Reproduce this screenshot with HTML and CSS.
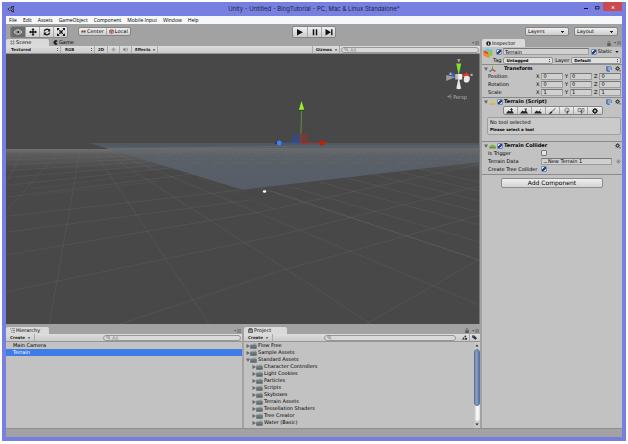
FILE: index.html
```html
<!DOCTYPE html>
<html lang="en">
<head>
<meta charset="utf-8">
<title>Unity - Untitled - BlogTutorial - PC, Mac &amp; Linux Standalone*</title>
<link rel="stylesheet" href="styles.css">
</head>
<body>
<svg class="defs" aria-hidden="true">
  <defs>
    <symbol id="fold-open" viewBox="0 0 4 4"><path d="M0 .5h4L2 4z" fill="#666"/></symbol>
    <symbol id="fold-closed" viewBox="0 0 4 4"><path d="M.5 0v4L4 2z" fill="#666"/></symbol>
    <symbol id="folder" viewBox="0 0 7 6"><path d="M.5 1.2h2.5l.6-.8h2.6v5.100H.5z" fill="#8b9294"/><path d="M1 .8h5" stroke="#b9bfc0" stroke-width=".6"/><path d="M.3 2.200h6.400v3.500H.3z" fill="#5f6a6c"/><path d="M.6 3h5.800" stroke="#879496" stroke-width=".7"/></symbol>
    <symbol id="panel-menu" viewBox="0 0 7 4"><path d="M0 1h2.400L1.200 2.600z" fill="#555"/><path d="M3 .8h4M3 2h4M3 3.200h4" stroke="#666" stroke-width=".7"/></symbol>
    <symbol id="lock" viewBox="0 0 4 5"><path d="M1 2.500V1.400a1 1 0 0 1 2 0v1.100" fill="none" stroke="#666" stroke-width=".7"/><path d="M.3 2.300h3.400V5H.3z" fill="#555"/></symbol>
    <symbol id="gear" viewBox="0 0 6 6"><circle cx="2.600" cy="2.600" r="1.500" fill="none" stroke="#333" stroke-width="1"/><path d="M2.600 0v5.200M0 2.600h5.200M.8.8l3.600 3.600M4.400.8.8 4.400" stroke="#333" stroke-width=".5"/><circle cx="2.600" cy="2.600" r=".7" fill="#c2c2c2"/><path d="M4.200 4.500H6l-.9 1.300z" fill="#333"/></symbol>
    <symbol id="book" viewBox="0 0 6 6"><path d="M.3.3h4L5.700 1.500v4.200H1.500L.3 4.500z" fill="#3f65a0"/><path d="M1.600.6h3.600v4.200H1.600z" fill="#8fa9cf"/><path d="M4 4.200h1.700v1.500H4z" fill="#e8eef5"/></symbol>
    <symbol id="search" viewBox="0 0 6 5"><circle cx="2" cy="2" r="1.300" fill="none" stroke="#777" stroke-width=".6"/><path d="m3 3 1.300 1.500" stroke="#777" stroke-width=".7"/></symbol>
  </defs>
</svg>
<div class="window">
  <header class="titlebar">
    <svg class="app-icon" viewBox="0 0 8 8" aria-hidden="true"><path d="M7.300.8 4.200 1.600 3.700 2.500H2.600L.4 4.100l2.200 1.700h1.100l.5.800 3.100.8L6.600 4.600V3.400z" fill="#23263a"/><path d="M2.100 4.100h2.700L6 2M4.800 4.100 6 6.200M2.100 4.100l1.600-1.400M2.100 4.100l1.600 1.400" fill="none" stroke="#c3c8ee" stroke-width=".6"/></svg>
    <h1 class="title">Unity - Untitled - BlogTutorial - PC, Mac &amp; Linux Standalone*</h1>
    <div class="window-buttons">
      <button type="button" aria-label="Minimize"><svg viewBox="0 0 10 8"><path d="M3 5.500h4" stroke="#111" stroke-width="1"/></svg></button>
      <button type="button" aria-label="Maximize"><svg viewBox="0 0 10 8"><path d="M3.500 3.500h3.500v2.500H3.500z" fill="none" stroke="#222" stroke-width=".9"/></svg></button>
      <button type="button" class="close" aria-label="Close"><svg viewBox="0 0 10 8"><path d="m3.700 3.200 2.600 2.600M6.300 3.200 3.700 5.800" stroke="#fff" stroke-width=".9"/></svg></button>
    </div>
  </header>
  <nav class="menubar">
    <button type="button">File</button><button type="button">Edit</button><button type="button">Assets</button><button type="button">GameObject</button><button type="button">Component</button><button type="button">Mobile Input</button><button type="button">Window</button><button type="button">Help</button>
  </nav>
  <div class="toolbar">
    <div class="toolbar-side">
      <div class="segments tools">
        <button type="button" class="active" aria-label="View"><svg viewBox="0 0 14 10"><path d="M3 5q4-4.500 8 0-4 4.500-8 0z" fill="#777" stroke="#e8e8e8" stroke-width=".8"/><circle cx="7" cy="5" r="1.500" fill="#222" stroke="#ddd" stroke-width=".5"/></svg></button>
        <button type="button" aria-label="Move"><svg viewBox="0 0 14 10"><path d="M7 2v6M4 5h6" stroke="#111" stroke-width="1.300"/><path d="M7 1l1.600 1.700H5.400zM7 9l1.600-1.700H5.400zM3 5l1.700-1.600v3.200zM11 5 9.300 3.400v3.200z" fill="#111"/></svg></button>
        <button type="button" aria-label="Rotate"><svg viewBox="0 0 14 10"><path d="M4.300 4.300C4.800 2 7.500 1.600 9 3M9.700 5.700C9.200 8 6.500 8.400 5 7" fill="none" stroke="#111" stroke-width="1.300"/><path d="M10.200 1.500v2.900H7.400zM3.800 8.500V5.600h2.800z" fill="#111"/></svg></button>
        <button type="button" aria-label="Scale"><svg viewBox="0 0 14 10"><path d="M5.500 3.500h3v3h-3z" fill="#222"/><path d="m4 2 6 6M10 2 4 8" stroke="#222" stroke-width=".9"/><path d="M3 1h2.700L3 3.700zM11 1H8.300L11 3.700zM3 9h2.700L3 6.300zM11 9H8.300L11 6.300z" fill="#111"/></svg></button>
      </div>
      <div class="segments handles">
        <button type="button"><svg class="mini" viewBox="0 0 5 5" aria-hidden="true"><path d="M.4 1.500h1.800v2H.4z" fill="#a33"/><path d="M2.500 1.500h2v2h-2z" fill="#444"/></svg>Center</button>
        <button type="button"><svg class="mini" viewBox="0 0 5 5" aria-hidden="true"><path d="m2.500.3 2 1v2.400l-2 1-2-1V1.300z" fill="#d7a5a5" stroke="#a33" stroke-width=".6"/><path d="M2.500 2.300v2M.7 1.500l1.800.8 1.800-.8" fill="none" stroke="#444" stroke-width=".6"/></svg>Local</button>
      </div>
    </div>
    <div class="segments play">
      <button type="button" aria-label="Play"><svg viewBox="0 0 14 10"><path d="M4 2v6.400l6-3.200z" fill="#111"/></svg></button>
      <button type="button" aria-label="Pause"><svg viewBox="0 0 14 10"><path d="M5.500 2.300v6M8.500 2.300v6" stroke="#111" stroke-width="1.500"/></svg></button>
      <button type="button" aria-label="Step"><svg viewBox="0 0 14 10"><path d="M3.500 2v6.400l5.500-3.200z" fill="#111"/><path d="M9.800 2.200v6" stroke="#111" stroke-width="1.400"/></svg></button>
    </div>
    <div class="toolbar-side end">
      <select class="drop" aria-label="Layers"><option>Layers</option></select>
      <select class="drop" aria-label="Layout"><option>Layout</option></select>
    </div>
  </div>
  <main class="workspace">
    <div class="left">
      <section class="panel scene">
        <div class="tabs">
          <button type="button" class="tab active"><svg class="mini" viewBox="0 0 5 5" aria-hidden="true"><path d="M1.500 0v5M3.500 0v5M0 1.500h5M0 3.500h5" stroke="#777" stroke-width=".5"/></svg>Scene</button>
          <button type="button" class="tab"><svg class="mini" viewBox="0 0 5 5" aria-hidden="true"><path d="M4.600 1A2.300 2.300 0 1 0 4.600 4L2.800 2.500z" fill="#222"/></svg>Game</button>
          <svg class="panel-menu" viewBox="0 0 7 4" aria-hidden="true"><use href="#panel-menu"/></svg>
        </div>
        <div class="bar">
          <select class="flat wide" aria-label="Draw mode"><option>Textured</option></select>
          <select class="flat" aria-label="Render mode"><option>RGB</option></select>
          <button type="button" class="cell">2D</button>
          <button type="button" class="cell" aria-label="Lighting"><svg class="mini" viewBox="0 0 5 5"><circle cx="2.500" cy="2.500" r="1.200" fill="none" stroke="#888" stroke-width=".7"/><path d="M2.500 0v5M0 2.500h5" stroke="#999" stroke-width=".4"/></svg></button>
          <button type="button" class="cell" aria-label="Audio"><svg class="mini" viewBox="0 0 5 5"><path d="M0 1.700h1L2.400.5v4L1 3.300H0z" fill="#777"/><path d="M3.200 1.300q1 1.200 0 2.400M4 .6q1.500 1.900 0 3.800" fill="none" stroke="#777" stroke-width=".5"/></svg></button>
          <button type="button" class="cell effects">Effects <svg class="tri" viewBox="0 0 4 4"><path d="M.8 1.200h2.400L2 3z" fill="#444"/></svg></button>
          <span class="spacer"></span>
          <button type="button" class="cell gizmos">Gizmos <svg class="tri" viewBox="0 0 4 4"><path d="M.8 1.200h2.400L2 3z" fill="#444"/></svg></button>
          <label class="search"><svg viewBox="0 0 6 5" aria-hidden="true"><use href="#search"/></svg><input type="text" placeholder="All" aria-label="Search scene"></label>
        </div>
        <svg class="viewport" viewBox="6 54 474 270" preserveAspectRatio="xMidYMid slice" role="img" aria-label="Scene view">
          <defs>
            <linearGradient id="haze" x1="0" y1="0" x2="0" y2="1"><stop offset="0" stop-color="#707070"/><stop offset=".25" stop-color="#5b5b5b"/><stop offset="1" stop-color="#484848"/></linearGradient>
            <linearGradient id="ground" x1="0" y1="0" x2="0" y2="1"><stop offset="0" stop-color="#4f5861"/><stop offset=".09" stop-color="#535c64"/><stop offset=".11" stop-color="#686a6c"/><stop offset=".3" stop-color="#5b6066"/><stop offset="1" stop-color="#555d69"/></linearGradient>
          </defs>
          <path d="M0 54h486v270H0z" fill="#484848"/>
          <path d="M0 149h486v22H0z" fill="url(#haze)"/>
          <g fill="none" stroke="#777" stroke-width=".6" stroke-opacity=".35">
            <path d="M0 160 190 154M0 165l210-9M0 171l160-10 60-4M0 178l170-14 42-5M0 186l160-17 62-8M0 198l215-27 35-4M0 217l240-27M0 233l250-33M0 256l260-44 220-48M0 293l275-57 205-50M120 324l160-53L480 215M366 324l114-65"/>
            <path d="M81 149 50 324M93 149l117 175M100 149l272 175M106 149 480 305M25 149 0 195M62 149 6 212M243 182l237 78M269 190l211 70M292 187l188 55M320 182l160 43M348 178l132 34M372 174l108 27M396 171l84 20M420 169l60 13"/>
            <path d="M140 175 30 189M160 181 30 196M200 178l80 33M190 171l110 18" stroke-opacity=".2"/>
          </g>
          <path d="M90 143h396v18L243 189.500z" fill="url(#ground)"/>
          <path d="M112 149 300 146h186v3" fill="none" stroke="#777b7e" stroke-width=".6" stroke-opacity=".6"/>
          <path d="M120 150.500h360M132 153h348M145 156h335M158 159h322M175 163h260" stroke="#777b82" stroke-opacity=".3" stroke-width=".7" stroke-dasharray="5 3 2 4 7 2"/>
          <path d="M301 143.500 302.200 108" stroke="#66913f" stroke-width=".9"/>
          <path d="m302 101-2.700 9h5.400z" fill="#9bef2c"/><path d="M299.500 110.200h5" stroke="#294017" stroke-width=".8"/>
          <path d="M293.500 134.500h7v8.500h-7z" fill="#314b89" fill-opacity=".7" stroke="#304fa4" stroke-width=".7"/>
          <path d="M300.500 134h7v9h-7z" fill="#773a36" fill-opacity=".7" stroke="#9a322b" stroke-width=".7"/>
          <path d="M280 143h21" stroke="#2b5bb0" stroke-width=".8"/><path d="M301 143h21" stroke="#a53426" stroke-width=".8"/>
          <path d="m275 143 4-2.300v4.600z" fill="#152a68"/><ellipse cx="279.600" cy="143" rx="2.300" ry="2.600" fill="#3d83f5"/>
          <path d="m328 142.700-6-2.500v5z" fill="#c6240d"/><ellipse cx="322" cy="142.900" rx="2.300" ry="2.600" fill="#b32311"/>
          <ellipse cx="265" cy="191.400" rx="1.700" ry="1.300" fill="#fff"/>
          <path d="m459 75-2.500-11.500h5z" fill="#7de62b"/>
          <path d="m459 77-2.400 11.500q2.400 1.500 4.800 0z" fill="#e6e6e6"/>
          <path d="m456 77-9.500-2v6z" fill="#9a9a9a"/>
          <path d="m458 77-5-4.600q-2 1-1.500 3.600z" fill="#2c62e8"/>
          <path d="m461 77 5.500-4.500 3.500 2.300-2 2z" fill="#e73c1b"/>
          <path d="M455.500 74h6v5.500h-6z" fill="#b9b9b9"/><path d="M458.500 74h4v5.500h-4z" fill="#efefef"/>
          <path d="M464.500 76.500q3-2 5.500.5.500 4-2 5.500-4 .5-4-2.500z" fill="#e8e8e8"/>
          <text class="axis" x="457.500" y="62">Y</text><text class="axis" x="470.500" y="76">x</text><text class="axis" x="449.500" y="75">z</text>
          <path d="M452 94.500l-4 2 4 2M452 96.500h-4" fill="none" stroke="#aaa" stroke-width=".5"/>
          <text class="persp" x="453.500" y="98.500">Persp</text>
        </svg>
      </section>
      <div class="bottom">
        <section class="panel">
          <div class="tabs">
            <button type="button" class="tab active"><svg class="mini" viewBox="0 0 5 5" aria-hidden="true"><path d="M0 .7h1M1.800.7H5M1 2.500h.8M2.500 2.500H5M1 4.300h.8M2.500 4.300H5" stroke="#555" stroke-width=".6"/></svg>Hierarchy</button>
            <svg class="panel-menu" viewBox="0 0 7 4" aria-hidden="true"><use href="#panel-menu"/></svg>
          </div>
          <div class="bar">
            <button type="button" class="cell create">Create <svg class="tri" viewBox="0 0 4 4"><path d="M.8 1.200h2.400L2 3z" fill="#444"/></svg></button>
            <span class="spacer"></span>
            <label class="search"><svg viewBox="0 0 6 5" aria-hidden="true"><use href="#search"/></svg><input type="text" placeholder="All" aria-label="Search hierarchy"></label>
          </div>
          <ul class="list objects">
            <li>Main Camera</li>
            <li class="selected">Terrain</li>
          </ul>
        </section>
        <section class="panel">
          <div class="tabs">
            <button type="button" class="tab active"><svg class="mini" viewBox="0 0 5 5" aria-hidden="true"><path d="M.5 1.500h4v3h-4zM1.300 1.500V.5h2.400v1" fill="#999" stroke="#444" stroke-width=".7"/></svg>Project</button>
            <svg class="lock" viewBox="0 0 4 5" aria-hidden="true"><use href="#lock"/></svg>
            <svg class="panel-menu" viewBox="0 0 7 4" aria-hidden="true"><use href="#panel-menu"/></svg>
          </div>
          <div class="bar">
            <button type="button" class="cell create">Create <svg class="tri" viewBox="0 0 4 4"><path d="M.8 1.200h2.400L2 3z" fill="#444"/></svg></button>
            <span class="spacer"></span>
            <label class="search project-search"><svg viewBox="0 0 6 5" aria-hidden="true"><use href="#search"/></svg><input type="text" aria-label="Search project"></label>
            <button type="button" class="cell filter" aria-label="Search by type"><svg class="mini" viewBox="0 0 5 5"><path d="M0 4.500 1.700 2l1 2.500z" fill="#333"/><circle cx="3.300" cy="1.400" r="1" fill="#444"/><path d="M3 3h2v1.800H3z" fill="#333"/></svg></button>
            <button type="button" class="cell filter" aria-label="Search by label"><svg class="mini" viewBox="0 0 5 5"><path d="M0 .5h2.300L5 3.300 3.500 4.800 0 2.300z" fill="#333"/><circle cx="1" cy="1.400" r=".4" fill="#ddd"/></svg></button>
          </div>
          <div class="scroll-area">
            <ul class="list assets">
              <li><svg class="fold"><use href="#fold-closed"/></svg><svg class="folder"><use href="#folder"/></svg>Flow Free</li>
              <li><svg class="fold"><use href="#fold-closed"/></svg><svg class="folder"><use href="#folder"/></svg>Sample Assets</li>
              <li><svg class="fold"><use href="#fold-open"/></svg><svg class="folder"><use href="#folder"/></svg>Standard Assets</li>
              <li class="child"><svg class="fold"><use href="#fold-closed"/></svg><svg class="folder"><use href="#folder"/></svg>Character Controllers</li>
              <li class="child"><svg class="fold"><use href="#fold-closed"/></svg><svg class="folder"><use href="#folder"/></svg>Light Cookies</li>
              <li class="child"><svg class="fold"><use href="#fold-closed"/></svg><svg class="folder"><use href="#folder"/></svg>Particles</li>
              <li class="child"><svg class="fold"><use href="#fold-closed"/></svg><svg class="folder"><use href="#folder"/></svg>Scripts</li>
              <li class="child"><svg class="fold"><use href="#fold-closed"/></svg><svg class="folder"><use href="#folder"/></svg>Skyboxes</li>
              <li class="child"><svg class="fold"><use href="#fold-closed"/></svg><svg class="folder"><use href="#folder"/></svg>Terrain Assets</li>
              <li class="child"><svg class="fold"><use href="#fold-closed"/></svg><svg class="folder"><use href="#folder"/></svg>Tessellation Shaders</li>
              <li class="child"><svg class="fold"><use href="#fold-closed"/></svg><svg class="folder"><use href="#folder"/></svg>Tree Creator</li>
              <li class="child"><svg class="fold"><use href="#fold-closed"/></svg><svg class="folder"><use href="#folder"/></svg>Water (Basic)</li>
            </ul>
            <div class="scrollbar" aria-hidden="true">
              <svg viewBox="0 0 6 6"><path d="M1.500 4h3L3 2z" fill="#222"/></svg>
              <div class="track"><div class="thumb"></div></div>
              <svg viewBox="0 0 6 6"><path d="M1.500 2h3L3 4z" fill="#222"/></svg>
            </div>
          </div>
        </section>
      </div>
    </div>
    <aside class="panel inspector">
      <div class="tabs">
        <button type="button" class="tab active"><svg class="mini" viewBox="0 0 5 5" aria-hidden="true"><circle cx="2.500" cy="2.500" r="2.300" fill="#222"/><path d="M2.500 2v2M2.500 .8v.7" stroke="#eee" stroke-width=".8"/></svg>Inspector</button>
        <svg class="lock" viewBox="0 0 4 5" aria-hidden="true"><use href="#lock"/></svg>
        <svg class="panel-menu" viewBox="0 0 7 4" aria-hidden="true"><use href="#panel-menu"/></svg>
      </div>
      <div class="object">
        <svg class="cube" viewBox="0 0 10 10" aria-hidden="true"><path d="M.5 2.500 4 .5l5.500 1.200L5.500 4z" fill="#5ccbe8"/><path d="m.5 2.500 5 1.500v5.800L.8 7.500z" fill="#e8522b"/><path d="m5.500 4 4-2.300-.3 5.500-3.700 2.600z" fill="#8fc83e"/><path d="m.7 5 4.800 1.500v3.300L.8 7.500z" fill="#f0902c"/></svg>
        <div class="object-rows">
          <div class="row">
            <input type="checkbox" id="active" checked aria-label="Active">
            <input type="text" class="field" value="Terrain" aria-label="Name">
            <label class="static"><input type="checkbox" checked>Static</label>
            <svg class="tri" viewBox="0 0 4 4" aria-hidden="true"><path d="M.3 1h3.400L2 3z" fill="#222"/></svg>
          </div>
          <div class="row tag-row">
            <label for="tag">Tag</label><select id="tag" class="popup"><option>Untagged</option></select>
            <label for="layer">Layer</label><select id="layer" class="popup"><option>Default</option></select>
          </div>
        </div>
      </div>
      <section class="component">
        <h2><svg class="fold"><use href="#fold-open"/></svg><svg class="badge" viewBox="0 0 7 6" aria-hidden="true"><path d="M3.500 3.500V.3" stroke="#6b2" stroke-width="1.200"/><path d="M3.500 3.500.5 5.500" stroke="#36c" stroke-width="1.200"/><path d="m3.500 3.500 3 2" stroke="#d32" stroke-width="1.200"/></svg><span class="no-check"></span><span class="name">Transform</span><svg class="ico"><use href="#book"/></svg><svg class="ico"><use href="#gear"/></svg></h2>
        <div class="vector"><span class="prop">Position</span><label>X<input type="text" value="0"></label><label>Y<input type="text" value="0"></label><label>Z<input type="text" value="0"></label></div>
        <div class="vector"><span class="prop">Rotation</span><label>X<input type="text" value="0"></label><label>Y<input type="text" value="0"></label><label>Z<input type="text" value="0"></label></div>
        <div class="vector"><span class="prop">Scale</span><label>X<input type="text" value="1"></label><label>Y<input type="text" value="1"></label><label>Z<input type="text" value="1"></label></div>
      </section>
      <section class="component">
        <h2><svg class="fold"><use href="#fold-open"/></svg><svg class="badge" viewBox="0 0 7 6" aria-hidden="true"><path d="M.3 5V3.500L3.500 1.500l3.200 2V5z" fill="#dfc46c"/><path d="M.3 5h6.400" stroke="#b79a45" stroke-width=".6"/></svg><input type="checkbox" checked aria-label="Terrain script enabled"><span class="name">Terrain (Script)</span><svg class="ico"><use href="#book"/></svg><svg class="ico"><use href="#gear"/></svg></h2>
        <div class="segments terrain-tools">
          <button type="button" aria-label="Raise or lower"><svg viewBox="0 0 14 8"><path d="M3 6.500 5.500 3.500 7 4.500l2-1 2 3z" fill="#222"/><path d="M8.500 4V1.700M7.300 2.700l1.200-1.300 1.200 1.300" fill="none" stroke="#222" stroke-width=".9"/></svg></button>
          <button type="button" aria-label="Paint height"><svg viewBox="0 0 14 8"><path d="M3 6.500 5.500 3.500 7 4.500l2-1 2 3z" fill="#222"/><path d="M7.500 2h2.500M8.700 2v2" stroke="#222" stroke-width=".8"/></svg></button>
          <button type="button" aria-label="Smooth height"><svg viewBox="0 0 14 8"><path d="M3 6.500 5.500 3.500 7 4.500l2-.5 2 2.500z" fill="#222"/><path d="M8.500 3.500 10 2" stroke="#888" stroke-width=".8"/></svg></button>
          <button type="button" aria-label="Paint texture"><svg viewBox="0 0 14 8"><path d="M10.500 1.200 6.300 5.200" stroke="#444" stroke-width=".9"/><path d="M6.800 4.500q-1.500 0-2 1.300T3.500 6.800q2.500.5 3.800-1.300z" fill="#222"/></svg></button>
          <button type="button" aria-label="Place trees"><svg viewBox="0 0 14 8"><circle cx="7" cy="3.200" r="2.200" fill="#d8d8d8" stroke="#555" stroke-width=".6"/><path d="M7.200 3.500v3.500M7.200 5l1.500-1" stroke="#333" stroke-width=".8"/></svg></button>
          <button type="button" aria-label="Paint details"><svg viewBox="0 0 14 8"><path d="M4 1.500h3v3H4zM8 1.500h2v3l-2 1z" fill="#ddd" stroke="#555" stroke-width=".6"/><path d="M7.300 3v4" stroke="#444" stroke-width=".8"/></svg></button>
          <button type="button" aria-label="Terrain settings"><svg viewBox="0 0 14 8"><circle cx="7" cy="4" r="1.700" fill="none" stroke="#222" stroke-width="1.500"/><path d="M7 1v1M7 6v1M4 4h1M9 4h1M4.900 1.900l.6.600M9.100 1.900l-.6.600M4.900 6.100l.6-.6M9.100 6.100l-.6-.6" stroke="#222" stroke-width="1"/></svg></button>
        </div>
        <div class="help"><p>No tool selected</p><p class="small">Please select a tool</p></div>
      </section>
      <section class="component">
        <h2><svg class="fold"><use href="#fold-open"/></svg><svg class="badge" viewBox="0 0 7 6" aria-hidden="true"><path d="M.3 5V3.300L3.500 1.500l3.200 1.800V5z" fill="#79b33a"/><path d="M.3 5h6.400" stroke="#3e6d1d" stroke-width=".7"/></svg><input type="checkbox" checked aria-label="Terrain Collider enabled"><span class="name">Terrain Collider</span><svg class="ico"><use href="#gear"/></svg></h2>
        <div class="prop-row"><label for="trigger" class="prop">Is Trigger</label><input type="checkbox" id="trigger"></div>
        <div class="prop-row"><label for="data" class="prop">Terrain Data</label><span class="object-field"><svg class="mini" viewBox="0 0 5 5" aria-hidden="true"><path d="M0 4h5L2.500 3z" fill="#666"/></svg><input type="text" id="data" value="New Terrain 1"></span><svg class="mini picker" viewBox="0 0 5 5" aria-hidden="true"><circle cx="2.500" cy="2.500" r="1.500" fill="none" stroke="#666" stroke-width=".6"/><circle cx="2.500" cy="2.500" r=".5" fill="#666"/></svg></div>
        <div class="prop-row"><label for="tree" class="prop">Create Tree Collider</label><input type="checkbox" id="tree" checked></div>
      </section>
      <div class="add"><button type="button">Add Component</button></div>
    </aside>
  </main>
  <footer class="status"></footer>
</div>
</body>
</html>
```
FILE: styles.css
```css
* { box-sizing: border-box; }
body {
  margin: 0;
  padding: 2px 2px 3px;
  height: 100vh;
  background: #fff;
  color: #000;
  font: 5px/7px "DejaVu Sans", sans-serif;
}
button, input, select {
  margin: 0;
  padding: 0;
  border: 0;
  background: none;
  color: inherit;
  font: inherit;
  appearance: none;
}
h1, h2, p, ul { margin: 0; padding: 0; }
svg { display: block; flex: none; }
.defs { position: absolute; width: 0; height: 0; }

.window {
  display: flex;
  flex-direction: column;
  height: 100%;
  border: 4px solid #7780e1;
  border-top: 0;
  background: #a2a2a2;
}

.titlebar {
  display: grid;
  grid-template-columns: 1fr auto 1fr;
  height: 14px;
  background: #7780e1;
}
.app-icon { width: 8px; height: 8px; margin: 3px 0 0 1px; }
.title {
  color: #1f2340;
  font: 6px/14px Inter, sans-serif;
}
.window-buttons { display: flex; justify-content: flex-end; gap: 1px; }
.window-buttons button { width: 10px; height: 9px; }
.window-buttons .close { width: 19px; background: #cb4a4f; }
.window-buttons svg { width: 10px; height: 8px; margin: 0 auto; }

.menubar {
  display: flex;
  gap: 6px;
  height: 8px;
  padding: 0 3px;
  background: #f6f7f9;
}
.menubar button { font: 5px/8px "Open Sans", sans-serif; }

.toolbar {
  display: grid;
  grid-template-columns: 1fr auto 1fr;
  align-items: center;
  height: 15px;
  padding: 0 4px;
}
.toolbar-side { display: flex; align-items: center; gap: 10px; }
.toolbar-side.end { justify-content: flex-end; gap: 5px; }
.segments {
  display: flex;
  overflow: hidden;
  border: 1px solid #858585;
  border-radius: 2px;
  background: linear-gradient(#efefef, #cdcdcd);
}
.segments button {
  display: flex;
  align-items: center;
  justify-content: center;
  width: 14px;
}
.segments button + button { border-left: 1px solid #a6a6a6; }
.segments button svg { width: 14px; height: 10px; margin: 0 -1px; }
.segments .active { background: #6b6b6b; }
.segments.handles button { width: auto; height: 7px; padding: 0 2px; gap: 1px; }
.segments.handles svg, .mini { width: 5px; height: 5px; margin: 0; }
.drop {
  width: 44px;
  height: 9px;
  padding: 0 2px;
  border: 1px solid #858585;
  border-radius: 2px;
  background:
    linear-gradient(#222, #222) right 4px top 3px / 3px 1px no-repeat,
    linear-gradient(#222, #222) right 5px top 4px / 1px 1px no-repeat,
    linear-gradient(#efefef, #cdcdcd);
}

.workspace {
  display: grid;
  flex: 1;
  grid-template-columns: minmax(0, 1fr) 140px;
  gap: 2px;
  min-height: 0;
}
.left { display: flex; flex-direction: column; gap: 3px; min-height: 0; }
.scene { flex: 286 1 0; }
.bottom {
  display: grid;
  flex: 101 1 0;
  grid-template-columns: 1fr 1fr;
  gap: 2px;
  min-height: 0;
}
.panel {
  display: flex;
  flex-direction: column;
  min-width: 0;
  min-height: 0;
}
.tabs { display: flex; align-items: center; height: 7px; padding-right: 1px; }
.tab {
  display: flex;
  align-items: center;
  gap: 1px;
  width: 43px;
  height: 7px;
  padding: 0 4px;
  line-height: 7px;
}
.tab.active { border-radius: 2px 2px 0 0; background: #dadada; }
.panel-menu { width: 7px; height: 4px; margin-left: auto; }
.lock { width: 4px; height: 5px; margin-left: auto; }
.lock + .panel-menu { margin-left: 3px; }

.bar {
  display: flex;
  align-items: center;
  height: 8px;
  padding: 0 1px 0 4px;
  background: linear-gradient(#dedede, #cacaca);
  border-bottom: 1px solid #969696;
}
.cell, .flat {
  display: flex;
  align-items: center;
  justify-content: center;
  height: 7px;
  padding: 0 3px;
  border-right: 1px solid #aaa;
  color: #222;
  font: bold 4px/7px "DejaVu Sans", sans-serif;
}
.flat {
  width: 34px;
  padding: 0 4px;
  background:
    linear-gradient(#555, #555) right 2px top 2px / 1px 1px no-repeat,
    linear-gradient(#555, #555) right 2px top 4px / 1px 1px no-repeat;
}
.flat.wide { width: 51px; padding: 0 1px; }
.effects, .gizmos { padding-right: 1px; }
.create { padding-left: 0; }
.gizmos { border-left: 1px solid #aaa; }
.filter { padding: 0 2px; }
.filter:last-child { border-right: 0; }
.tri { width: 4px; height: 4px; margin-left: 2px; }
.spacer { flex: 1; }
.search {
  display: flex;
  align-items: center;
  flex: 0 1 138px;
  height: 6px;
  margin-left: 1px;
  padding: 0 2px;
  border: 1px solid #979797;
  border-radius: 3px;
  background: #d9d9d9;
}
.search svg { width: 6px; height: 5px; }
.search input { flex: 1; min-width: 0; height: 4px; line-height: 4px; }
.search input::placeholder { color: #888; }
.project-search { flex-basis: 132px; margin-right: 4px; }

.viewport { flex: 1; width: 100%; min-height: 0; border-right: 1px solid #777; background: #484848; }
.axis { fill: #ddd; font-size: 4px; font-weight: bold; }
.persp { fill: #bdbdbd; font-size: 5px; }

.list {
  flex: 1;
  min-width: 0;
  overflow: hidden;
  list-style: none;
  background: #c2c2c2;
}
.objects li { padding-left: 7px; }
.selected { background: #3e7de7; color: #fff; }
.scroll-area { display: flex; flex: 1; min-height: 0; }
.assets li { display: flex; align-items: center; height: 7px; padding-left: 2px; }
.assets .child { padding-left: 8px; }
.fold { width: 4px; height: 4px; }
.folder { width: 7px; height: 6px; margin-right: 1px; }
.scrollbar {
  display: flex;
  flex-direction: column;
  width: 6px;
  background: #c9c9c9;
}
.scrollbar svg { width: 6px; height: 7px; }
.track { flex: 1; border-radius: 3px; background: linear-gradient(90deg, #bbb, #fff 50%, #ddd); }
.thumb {
  height: 79%;
  border: 1px solid #5d7298;
  border-radius: 3px;
  background: linear-gradient(90deg, #7189b3, #8ca1c4 40%, #5a76a6);
}

.inspector { background: #c2c2c2; }
.inspector .tabs { height: 8px; padding-right: 1px; background: #a2a2a2; }
.inspector .tab { height: 8px; }
.object { display: flex; padding: 1px 1px 0; }
.cube { width: 10px; height: 10px; }
.object-rows { display: flex; flex: 1; flex-direction: column; gap: 1px; min-width: 0; }
.row { display: flex; align-items: center; height: 7px; gap: 1px; padding-left: 3px; }
input[type="checkbox"] {
  flex: none;
  width: 6px;
  height: 6px;
  border: 1px solid #777;
  border-radius: 1px;
  background: #e4e4e4;
}
input[type="checkbox"]:checked {
  border-color: #7f8dac;
  background: linear-gradient(135deg, #d5e0f2 30%, #24447f 30%, #24447f 70%, #b6c8e6 70%);
}
.field, .vector input, .object-field {
  height: 7px;
  min-width: 0;
  padding-left: 1px;
  border: 1px solid #9d9d9d;
  border-top-color: #777;
  background: #d0d0d0;
  line-height: 5px;
}
.field { flex: 1; }
.static { display: flex; align-items: center; gap: 1px; margin-left: 1px; }
.static + .tri { margin: 0 2px; }
.tag-row { height: 8px; padding-left: 0; gap: 2px; }
.popup {
  flex: 1;
  height: 7px;
  min-width: 0;
  padding: 0 2px;
  border: 1px solid #929292;
  border-radius: 2px;
  background:
    linear-gradient(#444, #444) right 2px top 1px / 1px 1px no-repeat,
    linear-gradient(#444, #444) right 2px top 3px / 1px 1px no-repeat,
    #dedede;
  font: bold 4px/5px "DejaVu Sans", sans-serif;
}
.component { padding: 0 1px 1px 2px; border-top: 1px solid #8a8a8a; }
.component h2 {
  display: flex;
  align-items: center;
  gap: 1px;
  height: 7px;
  font: bold 5px/7px "DejaVu Sans", sans-serif;
}
.badge { width: 7px; height: 6px; }
.no-check { width: 6px; }
.name { flex: 1; }
.ico { width: 6px; height: 6px; margin-left: 2px; }
.vector {
  display: grid;
  grid-template-columns: 46px 1fr 1fr 1fr;
  gap: 2px;
  height: 8px;
  align-items: center;
  padding-left: 4px;
}
.vector label { display: flex; align-items: center; gap: 2px; }
.vector input { flex: 1; width: 0; }
.terrain-tools { width: 100px; margin: 1px auto 0; }
.terrain-tools button { flex: 1; height: 7px; }
.segments.terrain-tools button svg { height: 8px; }
.help {
  margin: 2px 0 5px 3px;
  padding: 0 2px;
  border: 1px solid #9f9f9f;
  border-radius: 2px;
  background: #cacaca;
}
.help p { line-height: 8px; }
.help .small { font: bold 4px/8px "DejaVu Sans", sans-serif; }
.prop-row { display: flex; align-items: center; height: 8px; padding-left: 4px; }
.prop-row .prop { width: 53px; white-space: nowrap; }
.object-field { display: flex; flex: 1; align-items: center; }
.object-field input { flex: 1; min-width: 0; height: 5px; }
.picker { margin-left: 4px; }
.add {
  display: flex;
  justify-content: center;
  padding-top: 3px;
  border-top: 1px solid #8a8a8a;
}
.add button {
  width: 102px;
  height: 10px;
  border: 1px solid #8d8d8d;
  border-radius: 2px;
  background: linear-gradient(#efefef, #d3d3d3);
  font: 6px/8px "DejaVu Sans", sans-serif;
}
.status { height: 9px; border-top: 1px solid #8f8f8f; }
```
